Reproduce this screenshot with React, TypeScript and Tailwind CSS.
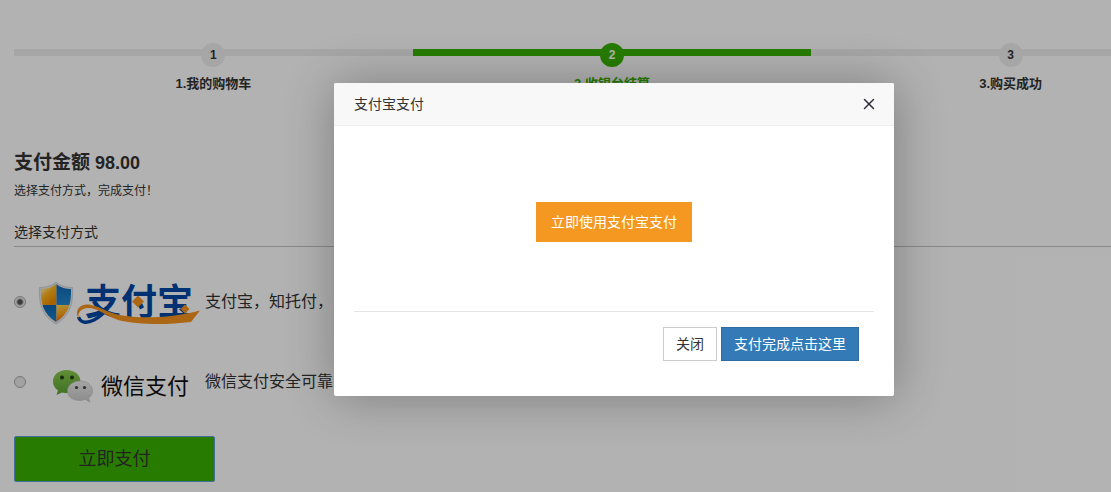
import { X } from 'lucide-react';

const steps = [
  { number: 1, label: '我的购物车', active: false },
  { number: 2, label: '收银台结算', active: true },
  { number: 3, label: '购买成功', active: false },
];

function AlipayLogo() {
  return (
    <svg className="h-[60px] w-[168px] shrink-0" viewBox="0 -5 168 60" role="img" aria-label="支付宝">
      <defs>
        <linearGradient id="gold" x1="0" y1="0" x2="0.6" y2="1">
          <stop offset="0" stopColor="#f0a000" />
          <stop offset="0.4" stopColor="#ffe27a" />
          <stop offset="0.6" stopColor="#ffb41e" />
          <stop offset="1" stopColor="#f08c00" />
        </linearGradient>
        <linearGradient id="flame" x1="0" y1="0" x2="0.3" y2="1">
          <stop offset="0" stopColor="#ffdc5a" />
          <stop offset="0.5" stopColor="#ffa010" />
          <stop offset="1" stopColor="#f03c00" />
        </linearGradient>
        <linearGradient id="azure" x1="0" y1="0" x2="0" y2="1">
          <stop offset="0" stopColor="#0a62b0" />
          <stop offset="1" stopColor="#2488d0" />
        </linearGradient>
        <clipPath id="shield">
          <path d="M20 7 C15 11 10 12 5 12 C4.500 25 7 37 20 45 C33 37 35.500 25 35 12 C30 12 25 11 20 7Z" />
        </clipPath>
      </defs>
      <path
        d="M20 5 C15 9.500 9 10.500 3.500 10.500 C2.500 26 6 39 20 47 C34 39 37.500 26 36.500 10.500 C31 10.500 25 9.500 20 5Z"
        fill="#e4e8ec"
        stroke="#c9cdd2"
        strokeWidth="0.800"
      />
      <g clipPath="url(#shield)">
        <rect x="3" y="3" width="17.500" height="25" fill="url(#gold)" />
        <rect x="20.500" y="3" width="17" height="25" fill="url(#azure)" />
        <rect x="3" y="28" width="17.500" height="20" fill="url(#azure)" />
        <rect x="20.500" y="28" width="17" height="20" fill="url(#flame)" />
      </g>
      <text
        x="49"
        y="38"
        fontSize="36"
        fontWeight="700"
        fill="#0047a5"
        fontFamily="'Noto Sans CJK SC', sans-serif"
      >
        支付宝
      </text>
      <path
        d="M42.500 40 C45 47 52 46 58 43 C64 40 68 36 72 31"
        fill="none"
        stroke="#0047a5"
        strokeWidth="3.500"
      />
      <path
        d="M43 42 C37 32 46 26 55 28 C63 29 72 36 84 38 C105 42 135 41 164 33.500 L155 45 C130 48 102 48 82 43 C70 39 62 31 52 31 C45 31 41 36 43 42Z"
        fill="#f7941d"
      />
      <path
        d="M102 18.500 l6 6 l-6 6 l-6 -6Z M149 27.500 l4.500 4.500 l-4.500 4.500 l-4.500 -4.500Z"
        fill="#f7941d"
      />
    </svg>
  );
}

function WechatLogo() {
  return (
    <svg className="h-[60px] w-[168px] shrink-0" viewBox="0 -5 168 60" role="img" aria-label="微信支付">
      <defs>
        <linearGradient id="green" x1="0" y1="0" x2="0" y2="1">
          <stop offset="0" stopColor="#8ccb4c" />
          <stop offset="1" stopColor="#5aa336" />
        </linearGradient>
        <linearGradient id="silver" x1="0" y1="0" x2="0" y2="1">
          <stop offset="0" stopColor="#ececec" />
          <stop offset="1" stopColor="#c8c8c8" />
        </linearGradient>
      </defs>
      <path
        d="M30.500 13 C22.500 13 17 18 17 24.500 C17 28.500 19 31.500 22 33.500 L20.500 38 L26 35.500 C37 38 44.500 32 44.500 24.500 C44.500 18 38.500 13 30.500 13Z"
        fill="url(#green)"
      />
      <circle cx="26" cy="20.500" r="2" fill="#24401a" />
      <circle cx="36" cy="20.500" r="2" fill="#24401a" />
      <path
        d="M44 24 C37 24 31.500 28.500 31.500 34 C31.500 39.500 36.500 43.500 44 43.500 L49.500 42.500 L54 45 L52.500 41 C55 39.500 56.500 37 56.500 34 C56.500 28.500 51.500 24 44 24Z"
        fill="url(#silver)"
        stroke="#c0c0c0"
        strokeWidth="0.600"
      />
      <circle cx="40.500" cy="30.500" r="1.600" fill="#444" />
      <circle cx="48.500" cy="30.500" r="1.600" fill="#444" />
      <text x="65" y="37" fontSize="22" fill="#111" fontFamily="'Noto Sans CJK SC', sans-serif">
        微信支付
      </text>
    </svg>
  );
}

const methods = [
  { id: 'alipay', text: '支付宝\uff0c知托付\uff0c安全可靠', Logo: AlipayLogo },
  { id: 'wechat', text: '微信支付安全可靠', Logo: WechatLogo },
];

function Steps() {
  return (
    <ol className="mr-1 grid grid-cols-3 pt-[43px] text-[13px] leading-5 font-bold">
      {steps.map((s) => (
        <li
          key={s.number}
          className={s.active ? 'flex flex-col items-center text-[#39b200]' : 'flex flex-col items-center text-[#333]'}
        >
          <div className="flex w-full items-start">
            <span className={s.active ? '-mr-1 mt-1.5 h-[7px] flex-1 bg-[#39b200]' : '-mr-1 mt-1.5 h-[7px] flex-1 bg-[#eee]'} />
            <span
              className={
                s.active
                  ? 'flex size-6 items-center justify-center rounded-full bg-[#39b200] text-xs text-white'
                  : 'flex size-6 items-center justify-center rounded-full bg-[#eee] text-xs text-[#333]'
              }
            >
              {s.number}
            </span>
            <span className={s.active ? '-ml-1 mt-1.5 h-[7px] flex-1 bg-[#39b200]' : '-ml-1 mt-1.5 h-[7px] flex-1 bg-[#eee]'} />
          </div>
          <span className="mt-[7px]">
            {s.number}.{s.label}
          </span>
        </li>
      ))}
    </ol>
  );
}

function PayDialog() {
  return (
    <div
      role="dialog"
      aria-modal="true"
      aria-labelledby="dialog-title"
      className="w-[560px] rounded-xs bg-white shadow-[1px_1px_50px_rgba(0,0,0,0.3)]"
    >
      <div className="flex items-center justify-between rounded-t-xs border-b border-[#eee] bg-[#f8f8f8] pr-4 pl-5">
        <h2 id="dialog-title" className="text-sm leading-[42px]">
          支付宝支付
        </h2>
        <button type="button" aria-label="关闭窗口" className="text-[#2e2d3c]">
          <X size={18} strokeWidth={2} />
        </button>
      </div>
      <div className="px-5 pb-[35px]">
        <div className="flex justify-center pt-[76px] pb-[69px]">
          <button type="button" className="h-10 bg-[#f59822] px-[15px] text-sm text-white">
            立即使用支付宝支付
          </button>
        </div>
        <div className="flex justify-end gap-1 border-t border-[#e5e5e5] px-[15px] pt-[15px]">
          <button type="button" className="h-[34px] border border-[#ccc] bg-white px-3 text-sm">
            关闭
          </button>
          <button type="button" className="h-[34px] border border-[#2e6da4] bg-[#337ab7] px-3 text-sm text-white">
            支付完成点击这里
          </button>
        </div>
      </div>
    </div>
  );
}

export default function App() {
  return (
    <div
      lang="zh-CN"
      className="min-h-screen overflow-hidden bg-white font-['Liberation_Sans','Noto_Sans_CJK_SC',sans-serif] text-[#333]"
    >
      <div className="relative min-h-screen min-w-[1228px] px-[14px] pb-[10px]">
        <main>
          <Steps />
          <h1 className="mt-[55px] flex items-baseline gap-[5px] text-lg leading-7 font-bold">
            <span className="text-[19px]">支付金额</span>
            <span>98.00</span>
          </h1>
          <p className="mt-1 text-xs leading-5">{'选择支付方式\uff0c完成支付\uff01'}</p>
          <form>
            <fieldset className="mt-[19px]">
              <legend className="w-full border-b border-[#c4c4c4] pb-0.5 text-sm leading-6">选择支付方式</legend>
              <div className="flex flex-col gap-5 pt-[25px]">
                {methods.map(({ id, text, Logo }) => (
                  <label key={id} className="flex items-center text-base">
                    <input
                      type="radio"
                      name="method"
                      value={id}
                      defaultChecked={id === 'alipay'}
                      className="size-3 shrink-0 appearance-none rounded-full border border-[#aaa] bg-[#e8e8e8] checked:bg-[radial-gradient(circle,#555_0_2px,#e8e8e8_4px)]"
                    />
                    <span className="ml-[10px] flex">
                      <Logo />
                    </span>
                    <span className="ml-px">{text}</span>
                  </label>
                ))}
              </div>
            </fieldset>
            <button
              type="button"
              className="mt-6 h-[46px] w-[201px] rounded-xs border border-[#5f9fe0] bg-[#39b200] text-lg"
            >
              立即支付
            </button>
          </form>
        </main>
        <div className="absolute inset-0 flex items-start justify-center bg-black/30 pt-[83px]">
          <PayDialog />
        </div>
      </div>
    </div>
  );
}
